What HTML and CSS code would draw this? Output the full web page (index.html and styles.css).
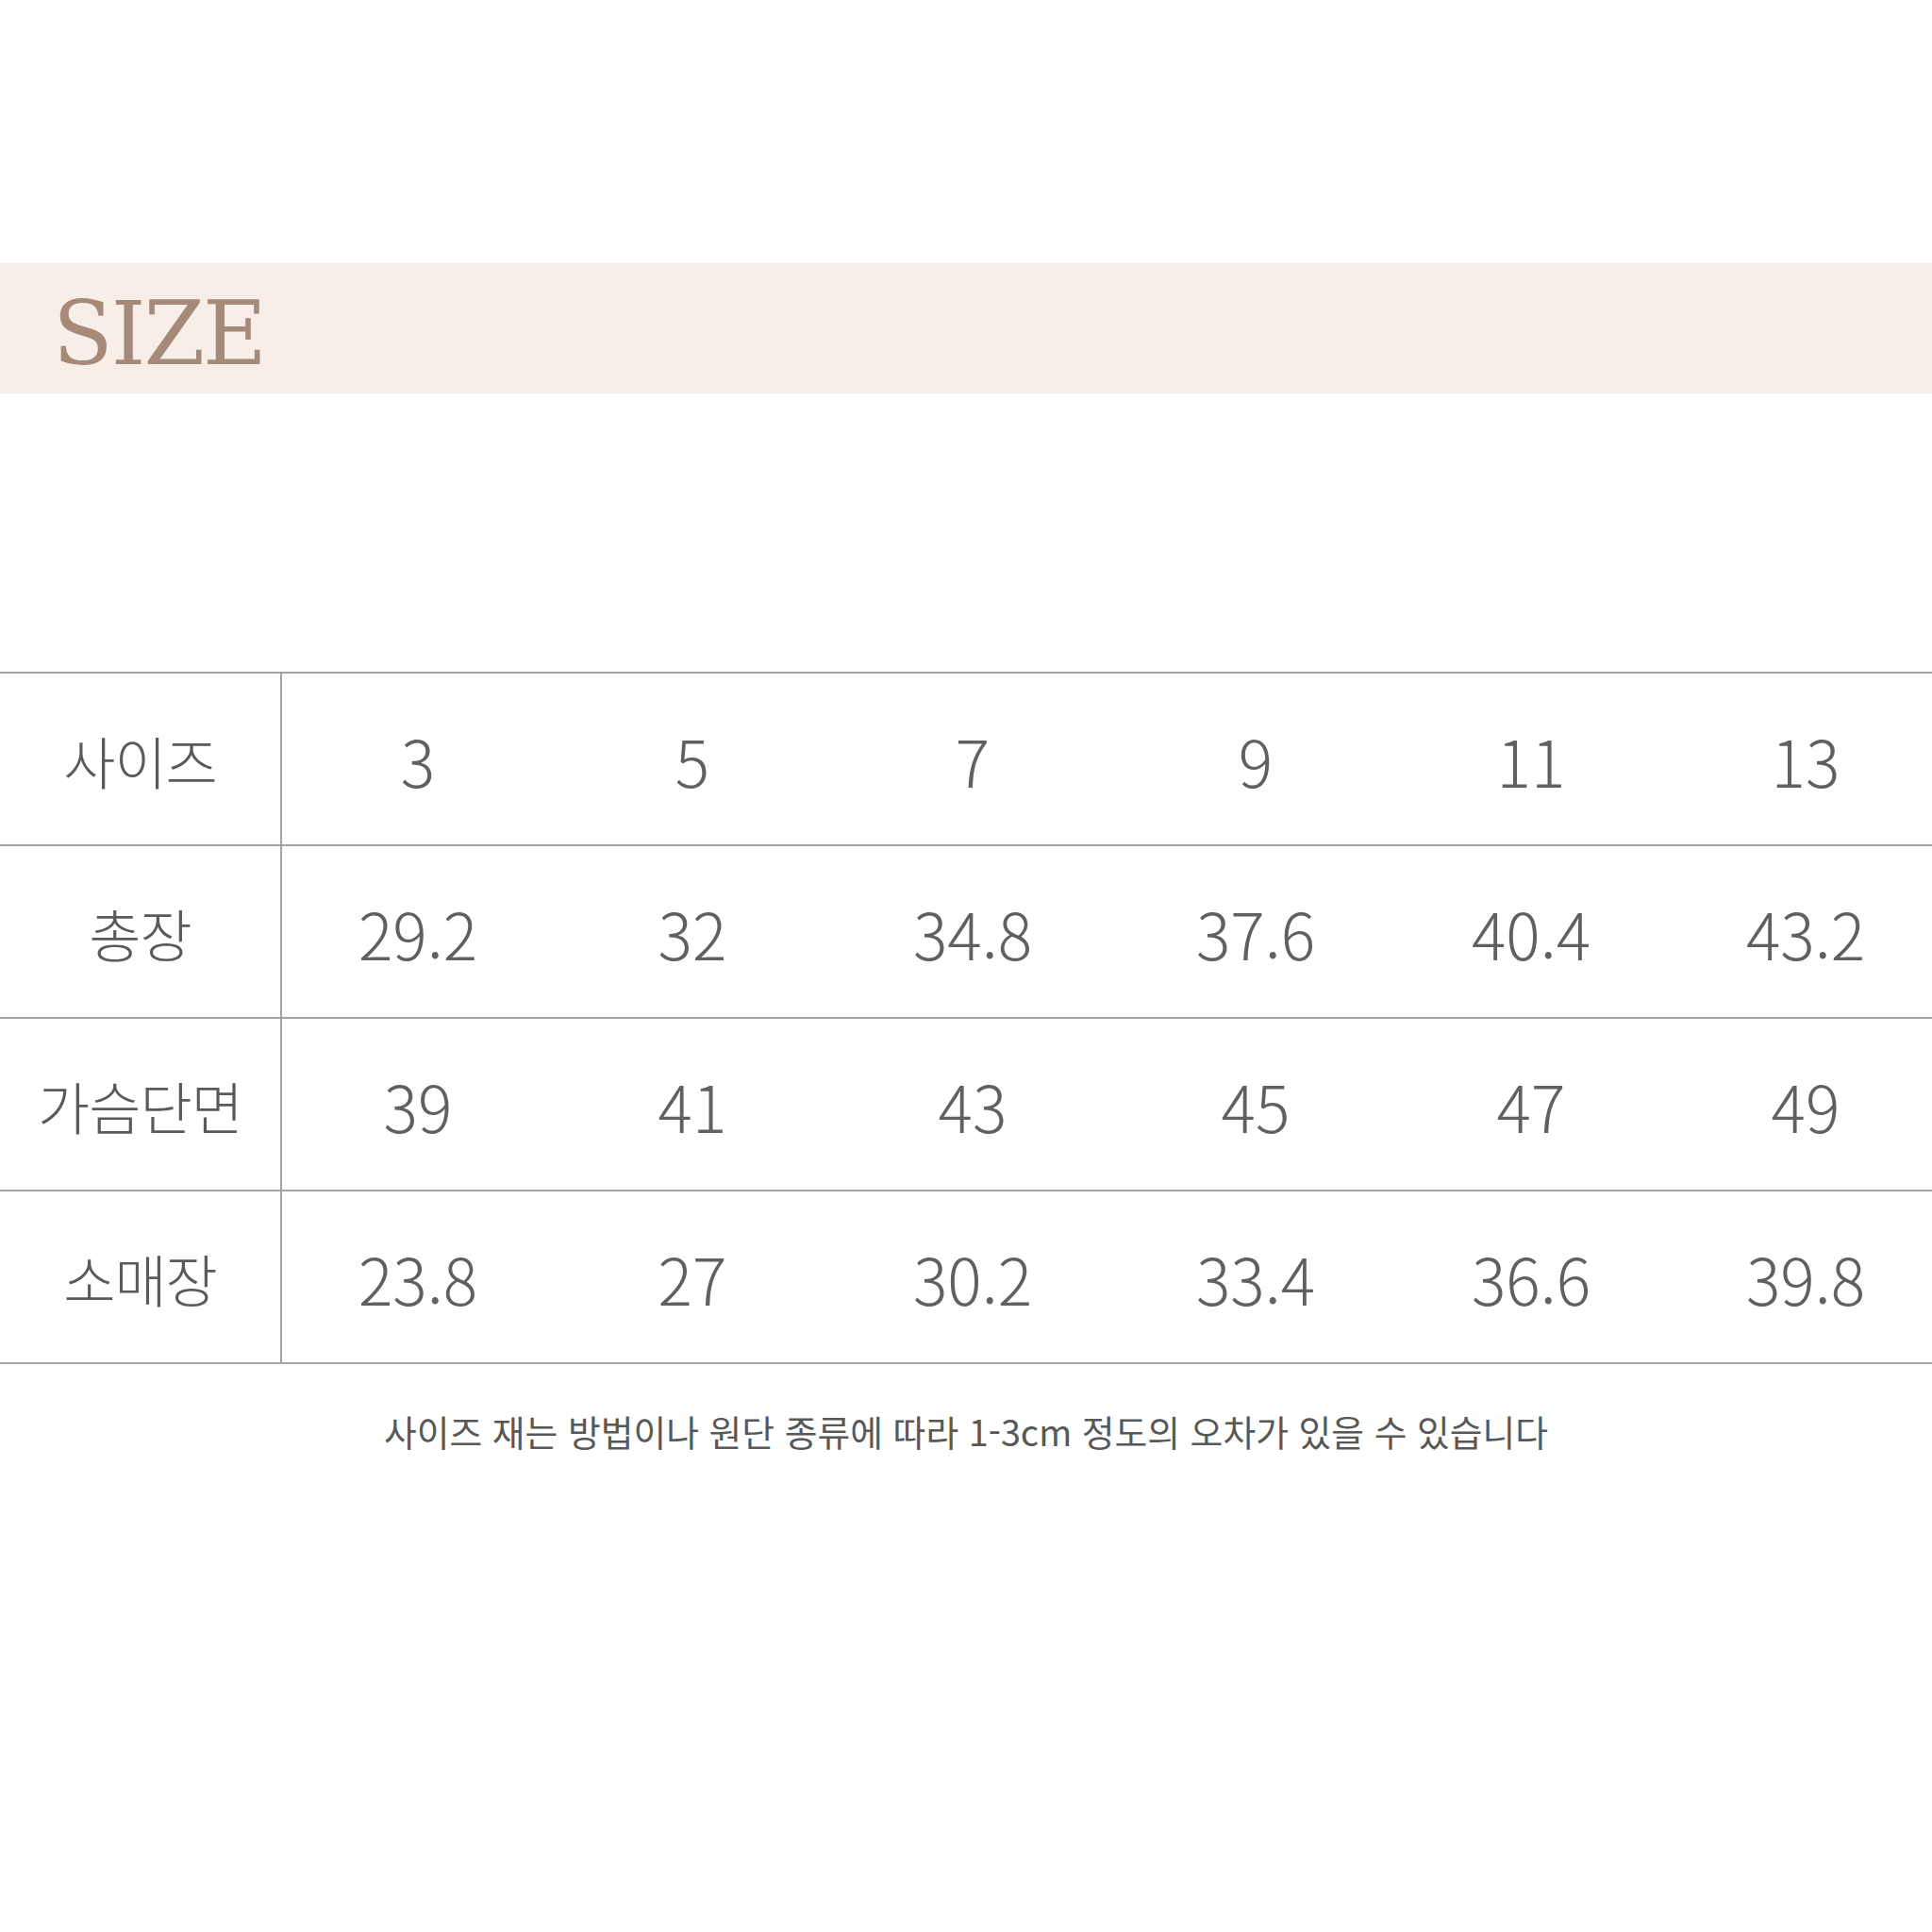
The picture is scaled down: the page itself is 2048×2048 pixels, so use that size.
FILE: index.html
```html
<!DOCTYPE html>
<html lang="ko">
<head>
<meta charset="utf-8">
<title>SIZE</title>
<link rel="stylesheet" href="styles.css">
</head>
<body>
<div class="page">
  <header class="band"><h1 class="band-title">SIZE</h1></header>
  <div class="size-table">
    <div class="cell label">사이즈</div>
    <div class="cell num">3</div><div class="cell num">5</div><div class="cell num">7</div><div class="cell num">9</div><div class="cell num">11</div><div class="cell num">13</div>
    <div class="cell label">총장</div>
    <div class="cell num">29.2</div><div class="cell num">32</div><div class="cell num">34.8</div><div class="cell num">37.6</div><div class="cell num">40.4</div><div class="cell num">43.2</div>
    <div class="cell label">가슴단면</div>
    <div class="cell num">39</div><div class="cell num">41</div><div class="cell num">43</div><div class="cell num">45</div><div class="cell num">47</div><div class="cell num">49</div>
    <div class="cell label">소매장</div>
    <div class="cell num">23.8</div><div class="cell num">27</div><div class="cell num">30.2</div><div class="cell num">33.4</div><div class="cell num">36.6</div><div class="cell num">39.8</div>
  </div>
  <p class="note">사이즈 재는 방법이나 원단 종류에 따라 1-3cm 정도의 오차가 있을 수 있습니다</p>
</div>
</body>
</html>
```
FILE: styles.css
```css
html, body {
  margin: 0;
  padding: 0;
  background: #ffffff;
  overflow: hidden;
}
.page {
  width: 2048px;
  height: 2048px;
  padding-top: 279px;
  box-sizing: border-box;
  font-family: "Noto Sans CJK KR", "Noto Sans", sans-serif;
}
.band {
  height: 138px;
  background: #f6eee7;
  display: flex;
  align-items: center;
  padding-left: 56px;
}
.band-title {
  margin: 0;
  font-family: "DejaVu Serif", "Liberation Serif", serif;
  font-weight: normal;
  font-size: 93px;
  line-height: 1;
  color: #a68a79;
  letter-spacing: -2px;
  padding-top: 12px;
}
.size-table {
  margin-top: 295px;
  display: grid;
  grid-template-columns: 299px 288px 294px 300px 300px 284px 298px;
  border-top: 2px solid #a3a3a3;
  width: 2063px;
}
.cell {
  border-bottom: 2px solid #a3a3a3;
  display: flex;
  align-items: center;
  justify-content: center;
  color: #606060;
  padding-top: 2px;
  height: 179px;
}
.label {
  border-right: 2px solid #a3a3a3;
  font-size: 60px;
  font-weight: 300;
  letter-spacing: -1px;
  color: #5a5a5a;
}
.num {
  font-size: 68px;
  font-weight: 300;
}
.note {
  margin: 48px 0 0;
  text-align: center;
  font-size: 37.8px;
  line-height: 1.2;
  color: #585858;
  letter-spacing: 0;
}
```
